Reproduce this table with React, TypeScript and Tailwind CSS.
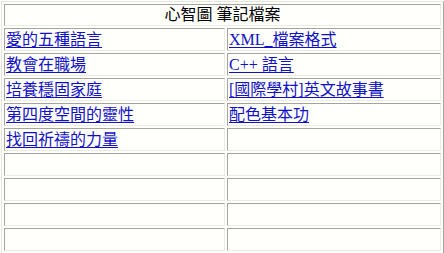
const ROWS: [string, string][] = [
  ["愛的五種語言", "XML_檔案格式"],
  ["教會在職場", "C++ 語言"],
  ["培養穩固家庭", "[國際學村]英文故事書"],
  ["第四度空間的靈性", "配色基本功"],
  ["找回祈禱的力量", ""],
  ["", ""],
  ["", ""],
  ["", ""],
  ["", ""],
];

// inset cell border, old-school html table look
const cell =
  "border border-t-[#a3a3a0] border-l-[#a3a3a0] border-b-[#ebebe4] border-r-[#ebebe4] p-[1px] bg-[#fffffc] align-middle";

export default function App() {
  return (
    <div className="bg-[#fffffc] w-[444px] h-[253px] overflow-hidden pt-[1px] pl-[1px]">
      <table
        className="w-[443px] border-separate border-spacing-[2px] border border-t-[#e6e6df] border-l-[#e6e6df] border-b-[#a3a3a0] border-r-[#a3a3a0] text-[16px]"
        style={{ fontFamily: '"Liberation Serif", "Noto Sans CJK TC", serif' }}
      >
        <tbody>
          <tr>
            <td colSpan={2} className={`${cell} text-center leading-[18px] text-black`}>
              心智圖 筆記檔案
            </td>
          </tr>
          {ROWS.map(([a, b], i) => (
            <tr key={i}>
              <td className={`${cell} w-[221px] leading-[19px]`}>
                {a ? (
                  <a href="#" className="text-[#1010c8] underline underline-offset-[2px]">
                    {a}
                  </a>
                ) : (
                  <span>&nbsp;</span>
                )}
              </td>
              <td className={`${cell} leading-[19px]`}>
                {b ? (
                  <a href="#" className="text-[#1010c8] underline underline-offset-[2px]">
                    {b}
                  </a>
                ) : (
                  <span>&nbsp;</span>
                )}
              </td>
            </tr>
          ))}
        </tbody>
      </table>
    </div>
  );
}
